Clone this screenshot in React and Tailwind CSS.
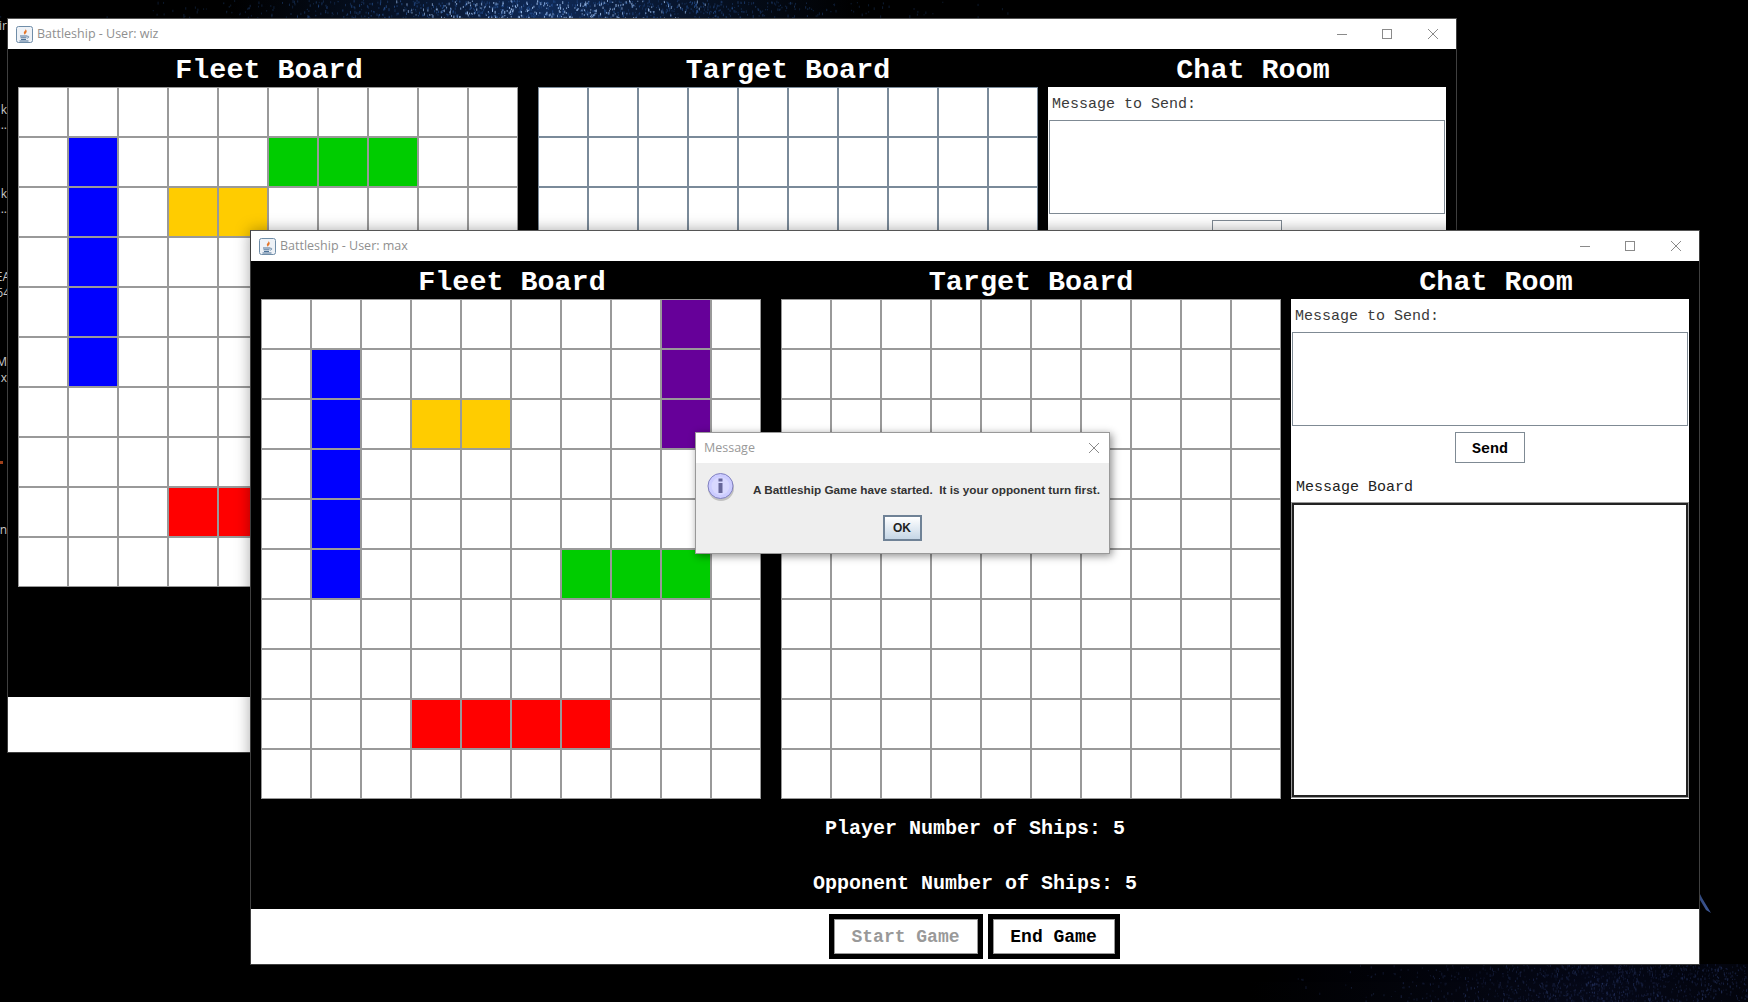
import React, { useMemo } from "react";

const WIZ_SHIPS = {
  "1-1": "blue", "2-1": "blue", "3-1": "blue", "4-1": "blue", "5-1": "blue",
  "1-5": "green", "1-6": "green", "1-7": "green",
  "2-3": "yellow", "2-4": "yellow",
  "8-3": "red", "8-4": "red", "8-5": "red", "8-6": "red",
};

const MAX_SHIPS = {
  "1-1": "blue", "2-1": "blue", "3-1": "blue", "4-1": "blue", "5-1": "blue",
  "0-8": "purple", "1-8": "purple", "2-8": "purple",
  "2-3": "yellow", "2-4": "yellow",
  "5-6": "green", "5-7": "green", "5-8": "green",
  "8-3": "red", "8-4": "red", "8-5": "red", "8-6": "red",
};

const SHIP_COLORS = {
  blue: "bg-[#0000ff]",
  green: "bg-[#00cc00]",
  yellow: "bg-[#ffcc00]",
  red: "bg-[#ff0000]",
  purple: "bg-[#660099]",
};

const CELLS = Array.from({ length: 100 }, (_, i) => `${Math.floor(i / 10)}-${i % 10}`);

const Board = ({ ships = {}, lineClass = "border-[#999999]" }) => (
  <div className="grid grid-cols-[repeat(10,50px)] grid-rows-[repeat(10,50px)] w-[500px] h-[500px] bg-white shrink-0">
    {CELLS.map((key) => (
      <div key={key} className={`border ${lineClass} ${SHIP_COLORS[ships[key]] || "bg-white"}`} />
    ))}
  </div>
);

const JavaIcon = () => (
  <svg width="17" height="17" viewBox="0 0 17 17" className="shrink-0">
    <rect x="0.5" y="0.5" width="16" height="16" rx="2" fill="#eef2f7" stroke="#6f8da8" />
    <path d="M9.5 2.5c1 2-2.5 3-1.5 5 .3.6.8 1 1 1.5-.2-1.500 2.500-2.500 1.500-4.500-.4-.8-.8-1.300-1-2z" fill="#e5762a" />
    <path d="M4 10h7M4.500 11.800h6M5 13.500h5M3.500 15h9" stroke="#4c7196" strokeWidth="1" fill="none" />
    <path d="M11 10.200c2.200-.6 2.500 1.700 0 2" stroke="#4c7196" strokeWidth="0.8" fill="none" />
  </svg>
);

const WindowControls = () => (
  <div className="flex items-center ml-auto h-full text-[#8a8a8a]">
    <svg width="12" height="12" viewBox="0 0 12 12" className="mr-[33px]">
      <path d="M1 6.500h10" stroke="#8a8a8a" fill="none" />
    </svg>
    <svg width="12" height="12" viewBox="0 0 12 12" className="mr-[34px]">
      <rect x="1.500" y="1.500" width="9" height="9" stroke="#8a8a8a" fill="none" />
    </svg>
    <svg width="12" height="12" viewBox="0 0 12 12" className="mr-[17px]">
      <path d="M1 1l10 10M11 1L1 11" stroke="#8a8a8a" fill="none" />
    </svg>
  </div>
);

const GameButton = ({ children, className }) => (
  <button className={`h-[45px] border-[5px] border-black bg-white font-bold text-[18px] ${className}`}>
    <span className="flex items-center justify-center h-full pt-[2px] border border-[#999999]">{children}</span>
  </button>
);

const ChatPanel = ({ lineClass = "border-[#7f8a94]" }) => (
  <div className="flex flex-col w-[398px] h-[500px] bg-white text-[15px] text-[#3a3a3a]">
    <div className="flex items-center h-[33px] pt-[4px] pl-[4px]">Message to Send:</div>
    <textarea readOnly className={`block mx-[1px] h-[94px] border ${lineClass} resize-none outline-none`} />
    <div className="flex justify-center mt-[6px] h-[31px]">
      <button className={`w-[70px] pt-[5px] border ${lineClass} font-bold text-black`}>Send</button>
    </div>
    <div className="flex items-center h-[40px] pt-[11px] pl-[5px] text-[#222222]">Message Board</div>
    <div className="flex-1 mx-[1px] mb-[2px] border-2 border-[#222222] ring-1 ring-[#999999]" />
  </div>
);

const GameWindow = ({ user, ships, position, targetLine, chatLine, shadow }) => (
  <div className={`absolute ${position} ${shadow} flex flex-col w-[1450px] h-[735px] bg-black border border-[#3f3f3f] border-t-[#555555] font-['Liberation_Mono',monospace]`}>
    <div className="flex items-center h-[30px] pl-[8px] bg-white shrink-0">
      <JavaIcon />
      <span className="ml-[4px] text-[12.5px] text-[#8f8f8f] font-['Open_Sans',sans-serif]">Battleship - User: {user}</span>
      <WindowControls />
    </div>
    <div className="flex gap-[10px] px-[10px]">
      <div className="flex gap-[20px]">
        <div className="flex flex-col">
          <div className="flex items-center justify-center h-[38px] pt-[7px] pl-[2px] text-white font-bold text-[28.4px]">Fleet Board</div>
          <Board ships={ships} />
        </div>
        <div className="flex flex-col">
          <div className="flex items-center justify-center h-[38px] pt-[7px] text-white font-bold text-[28.4px]">Target Board</div>
          <Board lineClass={targetLine} />
        </div>
      </div>
      <div className="flex flex-col">
        <div className="flex items-center justify-center h-[38px] pt-[7px] pl-[12px] text-white font-bold text-[28.4px]">Chat Room</div>
        <ChatPanel lineClass={chatLine} />
      </div>
    </div>
    <div className="flex flex-col items-center h-[110px] text-white font-bold text-[20px]">
      <div className="flex items-center h-[60px]">Player Number of Ships: 5</div>
      <div className="flex items-center h-[50px]">Opponent Number of Ships: 5</div>
    </div>
    <div className="flex justify-center gap-[5px] flex-1 pt-[5px] pr-[2px] bg-white">
      <GameButton className="w-[154px] text-[#999999]">Start Game</GameButton>
      <GameButton className="w-[132px] text-black">End Game</GameButton>
    </div>
  </div>
);

const MessageDialog = () => (
  <div className="absolute left-[695px] top-[432px] flex flex-col w-[415px] h-[122px] bg-[#eeeeee] border border-[#999999] shadow-[2px_2px_8px_rgba(0,0,0,0.45)] font-['Liberation_Sans',Arial,sans-serif]">
    <div className="flex items-center justify-between h-[30px] pl-[8px] pr-[9px] bg-white shrink-0">
      <span className="text-[12.5px] text-[#999999] font-['Open_Sans',sans-serif]">Message</span>
      <svg width="12" height="12" viewBox="0 0 12 12">
        <path d="M1 1l10 10M11 1L1 11" stroke="#8a8a8a" fill="none" />
      </svg>
    </div>
    <div className="flex items-start pl-[11px] pt-[9px]">
      <svg width="28" height="30" viewBox="0 0 28 30" className="shrink-0">
        <ellipse cx="14" cy="16" rx="13" ry="13" fill="#00000030" />
        <circle cx="13.500" cy="14" r="12.500" fill="#ccccff" stroke="#8080c0" />
        <circle cx="13.500" cy="14" r="9" fill="#d8d8ff" />
        <rect x="11.500" y="11" width="4" height="10" fill="#666699" />
        <rect x="11.500" y="6.500" width="4" height="3" fill="#666699" />
      </svg>
      <span className="ml-[18px] mt-[11px] text-[11.75px] leading-[14px] font-bold text-[#333333] whitespace-pre">
        A Battleship Game have started.  It is your opponent turn first.
      </span>
    </div>
    <div className="flex justify-center mt-[13px]">
      <button className="w-[39px] h-[26px] ml-[-1px] border-2 border-[#6f8296] bg-gradient-to-b from-white to-[#c5d6e6] text-[12px] font-bold text-[#222222]">
        OK
      </button>
    </div>
  </div>
);

// wallpaper specks, seeded so every render gives the same sky
const makeSpecks = () => {
  let seed = 7;
  const rand = () => {
    seed = (seed * 16807) % 2147483647;
    return seed / 2147483647;
  };
  const specks = [];
  for (let i = 0; i < 5000; i++) {
    const x = rand() * 1456;
    const y = rand() * 20;
    const d = (x - 545) / 210;
    const p = Math.exp(-d * d);
    if (rand() < p * 0.9) {
      const bright = rand() * p;
      specks.push({ x, y, h: 1 + rand() * 2, o: 0.25 + bright * 0.75, c: bright > 0.55 ? "#9fc0ee" : "#2f5fa8" });
    }
  }
  for (let i = 0; i < 3500; i++) {
    const x = 1250 + rand() * 498;
    const y = 964 + rand() * 38;
    const d = (x - 1640) / 170;
    const p = Math.exp(-d * d);
    if (rand() < p * 0.6) {
      specks.push({ x, y, h: 1 + rand() * 2, o: 0.15 + rand() * 0.3, c: "#34467f" });
    }
  }
  return specks;
};

const Wallpaper = () => {
  const specks = useMemo(makeSpecks, []);
  return (
    <svg width="1748" height="1002" viewBox="0 0 1748 1002" className="absolute inset-0">
      <defs>
        <linearGradient id="topGlow" x1="0" x2="1" y1="0" y2="0">
          <stop offset="0" stopColor="#0a1c3c" stopOpacity="0" />
          <stop offset="0.5" stopColor="#0f2a58" stopOpacity="1" />
          <stop offset="1" stopColor="#0a1c3c" stopOpacity="0" />
        </linearGradient>
        <linearGradient id="bottomGlow" x1="0" x2="1" y1="0" y2="0">
          <stop offset="0" stopColor="#050818" stopOpacity="0" />
          <stop offset="0.7" stopColor="#050818" stopOpacity="1" />
          <stop offset="1" stopColor="#050818" stopOpacity="0.5" />
        </linearGradient>
      </defs>
      <rect x="230" y="0" width="630" height="20" fill="url(#topGlow)" />
      <rect x="1250" y="964" width="498" height="38" fill="url(#bottomGlow)" />
      {specks.map((s, i) => (
        <rect key={i} x={s.x} y={s.y} width="1" height={s.h} fill={s.c} opacity={s.o} />
      ))}
      <path d="M1700 894l2 4 9 15-5-3-6-10z" fill="#3f5a9a" />
    </svg>
  );
};

// bits of desktop icon labels sticking out at the left edge
const DesktopLabels = () => (
  <div className="absolute left-0 top-0 w-[7px] h-[600px] overflow-hidden text-[12px] leading-[14px] text-[#c8c8c8] font-['Open_Sans',sans-serif]">
    <span className="absolute right-0 top-[19px] whitespace-nowrap">ir</span>
    <span className="absolute right-0 top-[103px]">k</span>
    <span className="absolute right-0 top-[118px]">...</span>
    <span className="absolute right-0 top-[187px]">k</span>
    <span className="absolute right-0 top-[202px]">...</span>
    <span className="absolute right-[-3px] top-[270px]">EA</span>
    <span className="absolute right-[-3px] top-[286px]">64</span>
    <span className="absolute right-0 top-[355px]">M</span>
    <span className="absolute right-0 top-[371px]">x</span>
    <span className="absolute left-0 top-[461px] w-[3px] h-[3px] bg-[#a0401a]" />
    <span className="absolute right-0 top-[523px]">n</span>
  </div>
);

export default function App() {
  return (
    <div className="relative w-[1748px] h-[1002px] overflow-hidden bg-black">
      <Wallpaper />
      <DesktopLabels />
      <GameWindow
        user="wiz"
        ships={WIZ_SHIPS}
        position="left-[7px] top-[18px]"
        targetLine="border-[#7a8a99]"
        chatLine="border-[#7f8a94]"
        shadow=""
      />
      <GameWindow
        user="max"
        ships={MAX_SHIPS}
        position="left-[250px] top-[230px]"
        targetLine="border-[#999999]"
        chatLine="border-[#7f8a94]"
        shadow="shadow-[0_0_14px_rgba(0,0,0,0.35)]"
      />
      <MessageDialog />
    </div>
  );
}
